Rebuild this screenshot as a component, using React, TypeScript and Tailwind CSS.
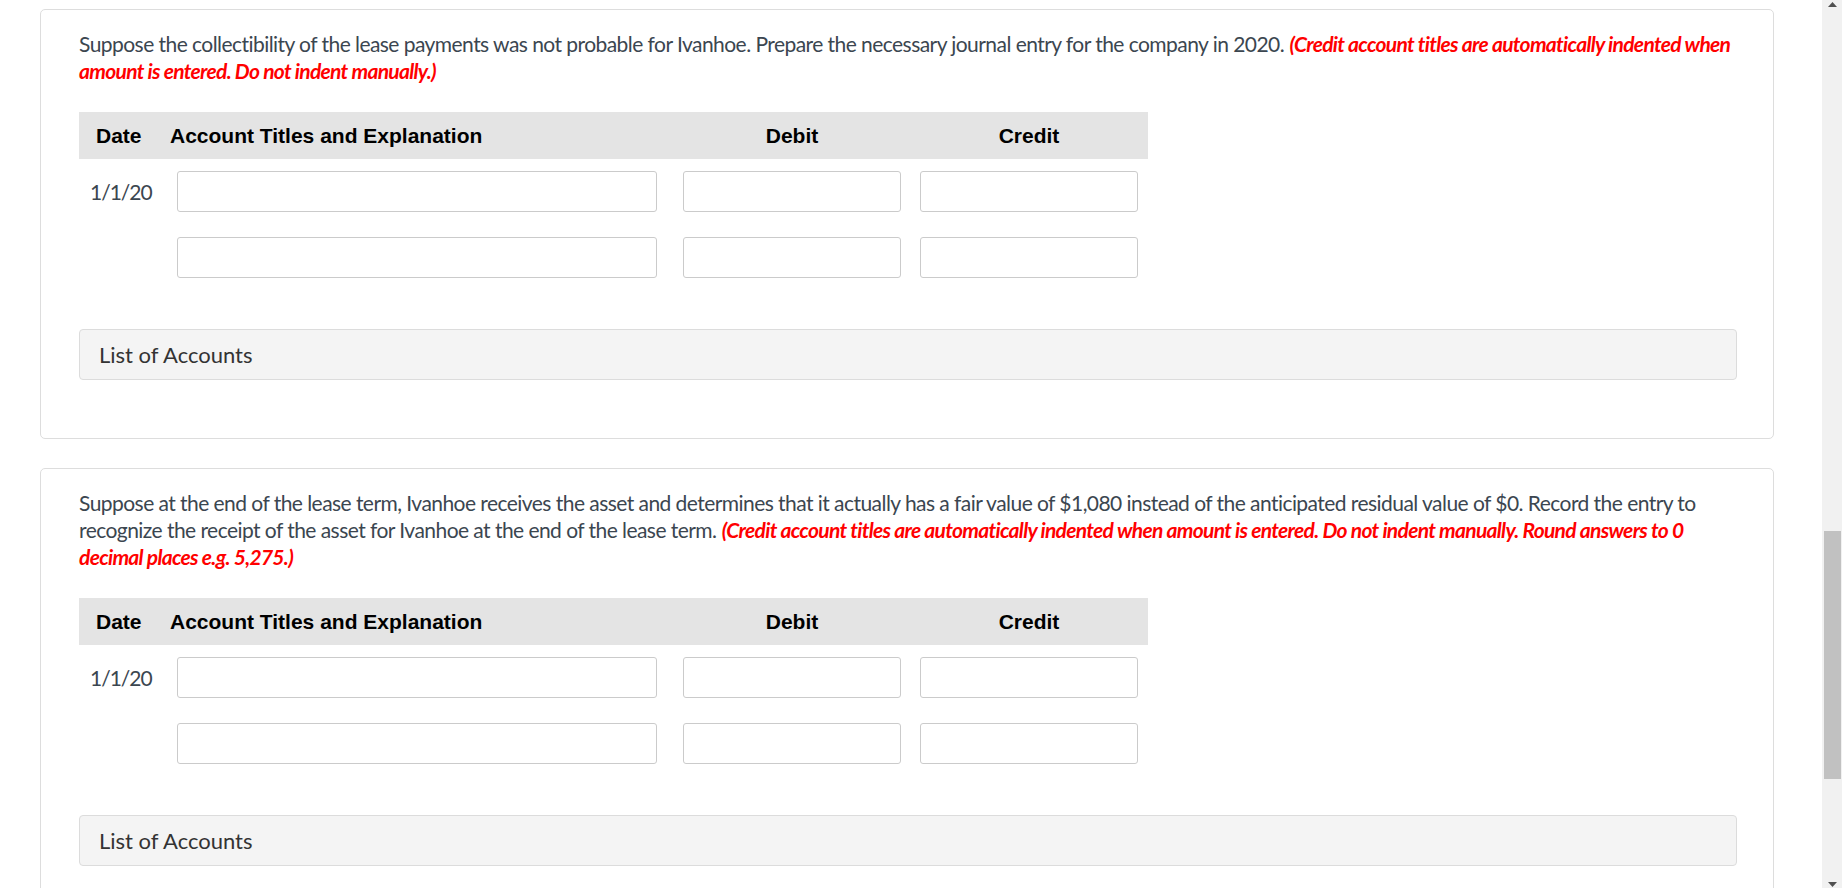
import React from "react";

type Entry = {
  id: string;
  text: string;
  note: string;
};

const ENTRIES: Entry[] = [
  {
    id: "a",
    text: "Suppose the collectibility of the lease payments was not probable for Ivanhoe. Prepare the necessary journal entry for the company in 2020.",
    note: "(Credit account titles are automatically indented when amount is entered. Do not indent manually.)",
  },
  {
    id: "b",
    text: "Suppose at the end of the lease term, Ivanhoe receives the asset and determines that it actually has a fair value of $1,080 instead of the anticipated residual value of $0. Record the entry to recognize the receipt of the asset for Ivanhoe at the end of the lease term.",
    note: "(Credit account titles are automatically indented when amount is entered. Do not indent manually. Round answers to 0 decimal places e.g. 5,275.)",
  },
];

function Field({ className }: { className: string }) {
  return (
    <input
      type="text"
      className={`h-[41px] rounded-[3px] border border-[#cbcbcb] bg-white px-2 outline-none ${className}`}
    />
  );
}

function JournalRow({ date }: { date?: string }) {
  return (
    <div className="flex items-center">
      <div className="w-[98px] pl-[11px] text-[21px] tracking-[-1px] text-[#3b4650]">{date}</div>
      <Field className="w-[480px]" />
      <Field className="ml-[26px] w-[218px]" />
      <Field className="ml-[19px] w-[218px]" />
    </div>
  );
}

function QuestionCard({ entry }: { entry: Entry }) {
  return (
    <div className="ml-[40px] w-[1734px] rounded-[5px] border border-[#dddddd] bg-white pt-[20px] pr-[36px] pb-[58px] pl-[38px]">
      <p className="text-[21px] leading-[27px] text-[#3b4650]">
        <span className="tracking-[-0.55px]">{entry.text}</span>{" "}
        <span className="font-bold italic tracking-[-0.7px] text-[#ff0000]">{entry.note}</span>
      </p>

      {/* journal table */}
      <div className="mt-[28px] w-[1069px]">
        <div className="flex h-[47px] items-center bg-[#e4e4e4] font-['Liberation_Sans',Arial,sans-serif] text-[21px] font-bold text-black">
          <div className="w-[91px] pl-[17px]">Date</div>
          <div className="w-[513px]">Account Titles and Explanation</div>
          <div className="w-[218px] text-center">Debit</div>
          <div className="ml-[19px] w-[218px] text-center">Credit</div>
        </div>
        <div className="mt-[12px] flex flex-col gap-[25px]">
          <JournalRow date="1/1/20" />
          <JournalRow />
        </div>
      </div>

      <div className="mt-[51px] flex h-[51px] items-center rounded-[4px] border border-[#dcdcdc] bg-[#f4f4f4] pl-[19px] text-[22px] text-[#333333]">
        List of Accounts
      </div>
    </div>
  );
}

export default function App() {
  return (
    <div className="flex h-screen w-full overflow-hidden bg-white font-['Lato',sans-serif]">
      <div className="flex flex-1 flex-col gap-[29px] overflow-hidden pt-[9px]">
        {ENTRIES.map((e) => (
          <QuestionCard key={e.id} entry={e} />
        ))}
      </div>

      {/* scrollbar */}
      <div className="flex w-[20px] flex-col items-center bg-[#f1f1f1]">
        <svg width="9" height="6" viewBox="0 0 9 6" className="mt-[2px]">
          <path d="M4.5 0 L9 5 L0 5 Z" fill="#505050" />
        </svg>
        <div className="mt-[523px] ml-[1px] h-[249px] w-[17px] bg-[#c1c1c1]" />
        <svg width="9" height="6" viewBox="0 0 9 6" className="mt-[103px]">
          <path d="M0 0 L9 0 L4.5 5 Z" fill="#505050" />
        </svg>
      </div>
    </div>
  );
}
